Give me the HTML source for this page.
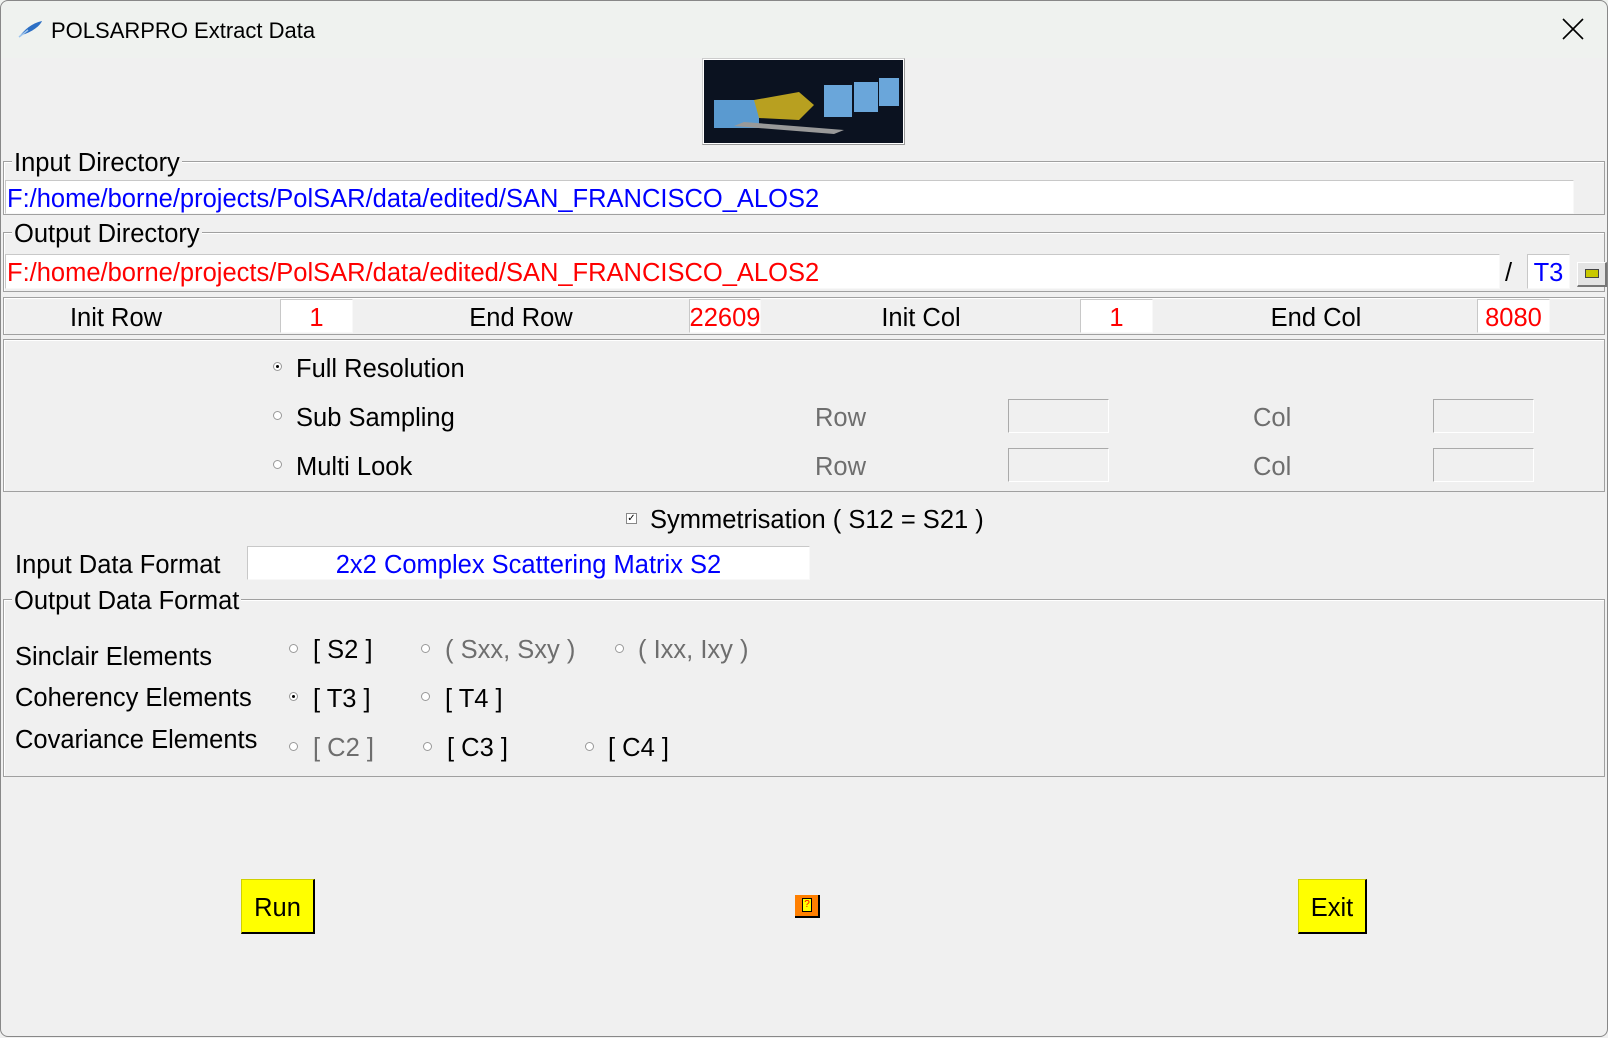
<!DOCTYPE html>
<html><head><meta charset="utf-8">
<style>
*{box-sizing:border-box;margin:0;padding:0}
body{width:1608px;height:1038px;background:#f0f0f0;font-family:"Liberation Sans",sans-serif;font-size:25.5px;color:#000;position:relative;overflow:hidden}
.a{position:absolute;white-space:nowrap}
.t{margin-top:2px}
.ent{position:absolute;background:#fff;border:1px solid #c8c8c8;border-right-color:#f8f8f8;border-bottom-color:#f8f8f8}
.frm{position:absolute;border:1px solid #a0a0a0;box-shadow:inset 1px 1px 0 #fff}
.lbl{position:absolute;background:#f0f0f0;padding:0 2px;line-height:30px}
.rad{position:absolute;width:9px;height:9px;border-radius:50%;border:1px solid #999;background:#fff}
.rad.on::after{content:"";position:absolute;left:2px;top:2px;width:3px;height:3px;border-radius:50%;background:#000}
.c{text-align:center}
.g{color:#6e6e6e}
.btn{position:absolute;background:#ffff00;border:1px solid #d0d000;border-right:2px solid #000;border-bottom:2px solid #000;text-align:center}
</style></head><body>
<div class="a" style="left:0;top:0;width:1608px;height:58px;background:#eff2ef"></div>
<svg class="a" style="left:18px;top:20px" width="26" height="18" viewBox="0 0 26 18"><path d="M1 17 C6 10 14 3 24 1 C22 6 14 12 4 15 Z" fill="#2c6fc4"/><path d="M1 17 L10 10" stroke="#9cc4ee" stroke-width="1.5"/></svg>
<div class="a" style="left:51px;top:17px;font-size:22px;line-height:28px">POLSARPRO Extract Data</div>
<svg class="a" style="left:1562px;top:18px" width="22" height="22" viewBox="0 0 22 22"><path d="M1 1L21 21M21 1L1 21" stroke="#000" stroke-width="1.6"/></svg>
<div class="a" style="left:702px;top:58px;width:203px;height:87px;border:1px solid #ccc;border-right-color:#999;border-bottom-color:#999;background:#fff;padding:1px">
<svg width="199" height="83" viewBox="0 0 199 83"><rect width="199" height="83" fill="#0b1220"/><rect x="10" y="40" width="45" height="28" fill="#5a9ad0"/><rect x="120" y="25" width="28" height="32" fill="#6aa6da"/><rect x="150" y="22" width="24" height="30" fill="#6aa6da"/><rect x="175" y="18" width="20" height="28" fill="#6aa6da"/><path d="M50 40 L95 32 L110 45 L95 60 L55 58Z" fill="#b8a020"/><path d="M40 62 L140 70 L130 74 L30 66Z" fill="#999"/></svg></div>
<div class="frm" style="left:3px;top:161px;width:1602px;height:54px"></div>
<div class="lbl" style="left:12px;top:148px">Input Directory</div>
<div class="ent" style="left:5px;top:180px;width:1569px;height:34px"></div>
<div class="a t" style="left:7px;top:182px;color:#0000ff;line-height:30px">F:/home/borne/projects/PolSAR/data/edited/SAN_FRANCISCO_ALOS2</div>
<div class="frm" style="left:3px;top:232px;width:1602px;height:60px"></div>
<div class="lbl" style="left:12px;top:219px">Output Directory</div>
<div class="ent" style="left:5px;top:254px;width:1495px;height:35px"></div>
<div class="a t" style="left:7px;top:256px;color:#ff0000;line-height:30px">F:/home/borne/projects/PolSAR/data/edited/SAN_FRANCISCO_ALOS2</div>
<div class="a t" style="left:1505px;top:256px;line-height:30px">/</div>
<div class="ent" style="left:1527px;top:254px;width:43px;height:35px"></div>
<div class="a c t" style="left:1527px;top:256px;width:43px;color:#0000ff;line-height:30px">T3</div>
<div class="a" style="left:1577px;top:262px;width:30px;height:25px;background:#e4e4e4;border:1px solid #fff;border-right:2px solid #777;border-bottom:2px solid #777"><div style="position:absolute;left:7px;top:6px;width:14px;height:9px;background:#c8c800;border:1px solid #444"></div></div>
<div class="frm" style="left:3px;top:297px;width:1602px;height:38px"></div>
<div class="a c t" style="left:36px;top:301px;width:160px;line-height:30px">Init Row</div>
<div class="ent" style="left:280px;top:299px;width:73px;height:34px"></div>
<div class="a c t" style="left:280px;top:301px;width:73px;color:#f00;line-height:30px">1</div>
<div class="a c t" style="left:441px;top:301px;width:160px;line-height:30px">End Row</div>
<div class="ent" style="left:689px;top:299px;width:72px;height:34px"></div>
<div class="a c t" style="left:685px;top:301px;width:80px;color:#f00;line-height:30px">22609</div>
<div class="a c t" style="left:841px;top:301px;width:160px;line-height:30px">Init Col</div>
<div class="ent" style="left:1080px;top:299px;width:73px;height:34px"></div>
<div class="a c t" style="left:1080px;top:301px;width:73px;color:#f00;line-height:30px">1</div>
<div class="a c t" style="left:1236px;top:301px;width:160px;line-height:30px">End Col</div>
<div class="ent" style="left:1477px;top:299px;width:73px;height:34px"></div>
<div class="a c t" style="left:1477px;top:301px;width:73px;color:#f00;line-height:30px">8080</div>
<div class="frm" style="left:3px;top:339px;width:1602px;height:153px"></div>
<div class="rad on" style="left:273px;top:362px"></div><div class="a t" style="left:296px;top:352px;line-height:30px">Full Resolution</div>
<div class="rad" style="left:273px;top:411px"></div><div class="a t" style="left:296px;top:401px;line-height:30px">Sub Sampling</div>
<div class="rad" style="left:273px;top:460px"></div><div class="a t" style="left:296px;top:450px;line-height:30px">Multi Look</div>
<div class="a g t" style="left:815px;top:401px;line-height:30px">Row</div>
<div class="a g t" style="left:815px;top:450px;line-height:30px">Row</div>
<div class="a g t" style="left:1253px;top:401px;line-height:30px">Col</div>
<div class="a g t" style="left:1253px;top:450px;line-height:30px">Col</div>
<div class="a" style="left:1008px;top:399px;width:101px;height:34px;border:1px solid #aaa;border-right-color:#fff;border-bottom-color:#fff"></div>
<div class="a" style="left:1008px;top:448px;width:101px;height:34px;border:1px solid #aaa;border-right-color:#fff;border-bottom-color:#fff"></div>
<div class="a" style="left:1433px;top:399px;width:101px;height:34px;border:1px solid #aaa;border-right-color:#fff;border-bottom-color:#fff"></div>
<div class="a" style="left:1433px;top:448px;width:101px;height:34px;border:1px solid #aaa;border-right-color:#fff;border-bottom-color:#fff"></div>
<div class="a" style="left:626px;top:513px;width:11px;height:11px;border:1px solid #888;background:#fff;font-size:10px;line-height:9px;text-align:center">&#10003;</div>
<div class="a t" style="left:650px;top:503px;line-height:30px">Symmetrisation ( S12 = S21 )</div>
<div class="a t" style="left:15px;top:548px;line-height:30px">Input Data Format</div>
<div class="ent" style="left:247px;top:546px;width:563px;height:34px"></div>
<div class="a c t" style="left:247px;top:548px;width:563px;color:#0000ff;line-height:30px">2x2 Complex Scattering Matrix S2</div>
<div class="frm" style="left:3px;top:599px;width:1602px;height:178px"></div>
<div class="lbl" style="left:12px;top:586px">Output Data Format</div>
<div class="a t" style="left:15px;top:640px;line-height:30px">Sinclair Elements</div>
<div class="a t" style="left:15px;top:681px;line-height:30px">Coherency Elements</div>
<div class="a t" style="left:15px;top:723px;line-height:30px">Covariance Elements</div>
<div class="rad" style="left:289px;top:644px"></div><div class="a t" style="left:313px;top:633px;line-height:30px">[ S2 ]</div>
<div class="rad" style="left:421px;top:644px"></div><div class="a g t" style="left:445px;top:633px;line-height:30px">( Sxx, Sxy )</div>
<div class="rad" style="left:615px;top:644px"></div><div class="a g t" style="left:638px;top:633px;line-height:30px">( Ixx, Ixy )</div>
<div class="rad on" style="left:289px;top:692px"></div><div class="a t" style="left:313px;top:682px;line-height:30px">[ T3 ]</div>
<div class="rad" style="left:421px;top:692px"></div><div class="a t" style="left:445px;top:682px;line-height:30px">[ T4 ]</div>
<div class="rad" style="left:289px;top:742px"></div><div class="a g t" style="left:313px;top:731px;line-height:30px">[ C2 ]</div>
<div class="rad" style="left:423px;top:742px"></div><div class="a t" style="left:447px;top:731px;line-height:30px">[ C3 ]</div>
<div class="rad" style="left:585px;top:742px"></div><div class="a t" style="left:608px;top:731px;line-height:30px">[ C4 ]</div>
<div class="btn" style="left:241px;top:879px;width:74px;height:55px;line-height:56px">Run</div>
<div class="a" style="left:795px;top:895px;width:25px;height:23px;background:#ff7f00;border-right:2px solid #000;border-bottom:2px solid #000"><div style="position:absolute;left:7px;top:3px;width:10px;height:14px;background:#ffff00;border:1px solid #000;font-size:10px;line-height:12px;text-align:center;color:#f00">?</div></div>
<div class="btn" style="left:1298px;top:879px;width:69px;height:55px;line-height:56px">Exit</div>
<div class="a" style="left:0;top:0;width:1608px;height:1037px;border:1px solid #888;border-radius:8px"></div>
</body></html>
